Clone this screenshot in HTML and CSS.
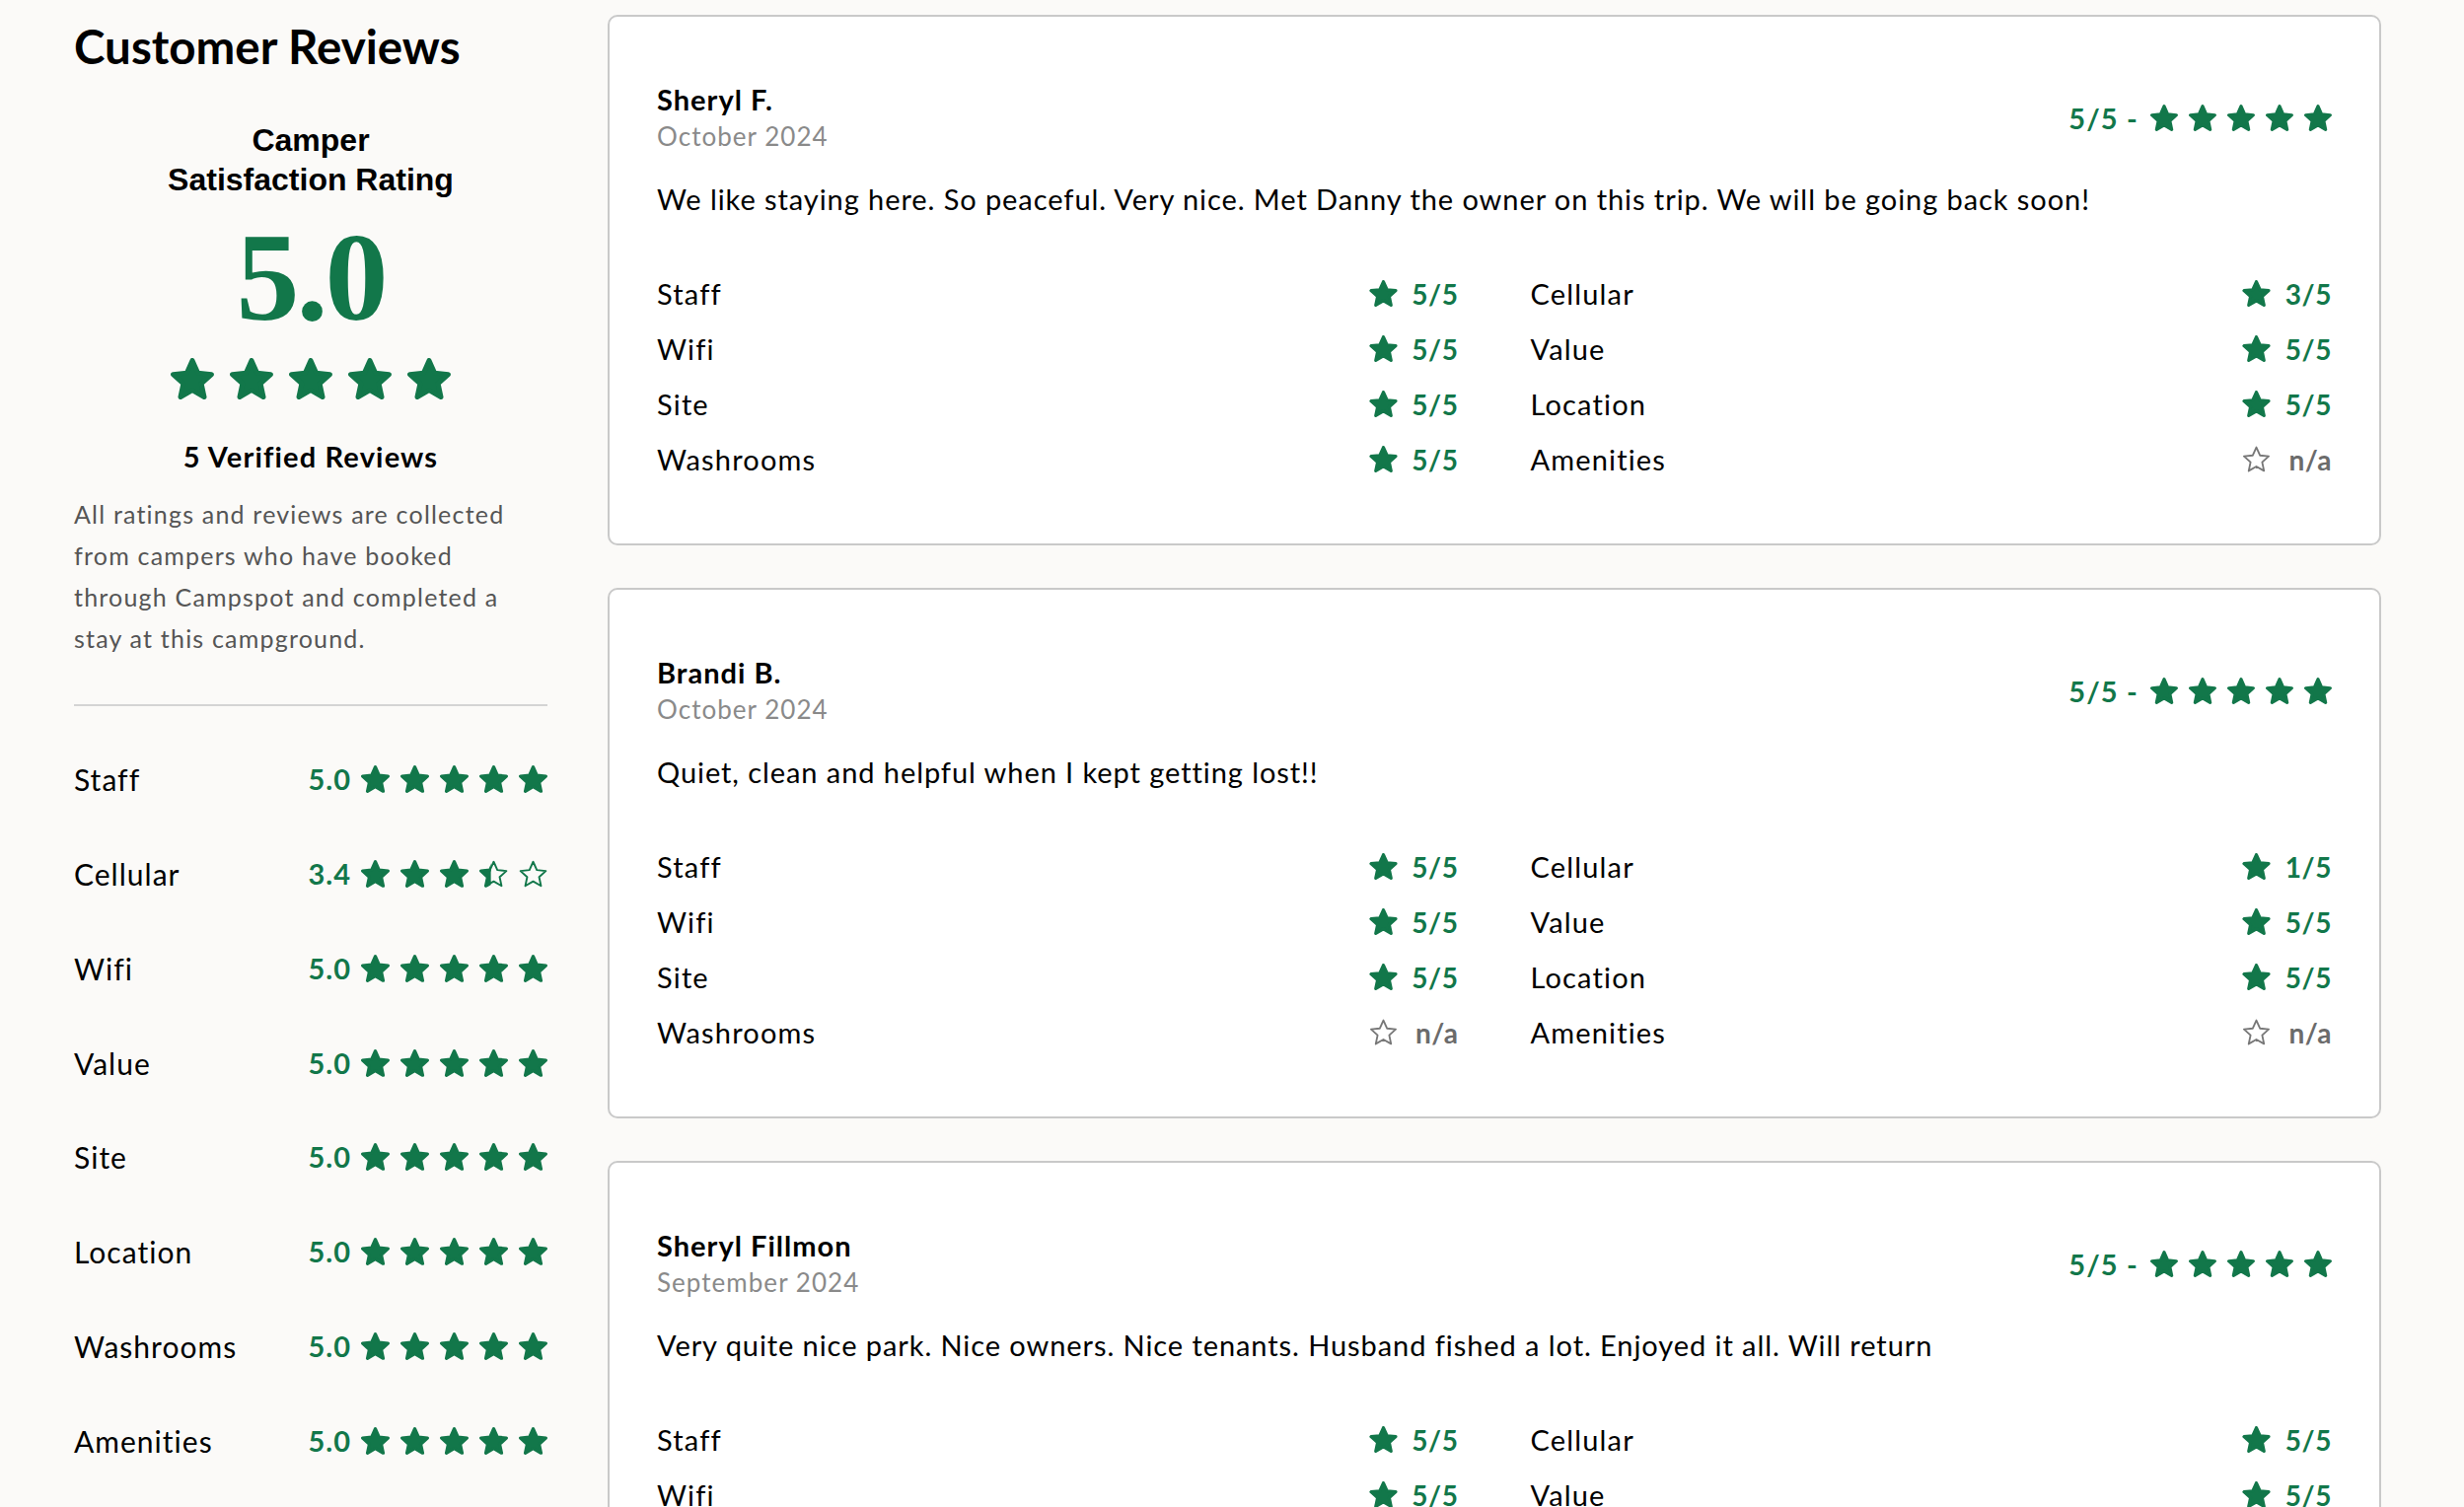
FILE: index.html
```html
<!DOCTYPE html>
<html lang="en">
<head>
<meta charset="utf-8">
<title>Customer Reviews</title>
<link rel="stylesheet" href="styles.css">
</head>
<body>
<svg class="sprite" width="0" height="0" aria-hidden="true">
  <defs>
    <symbol id="star" viewBox="0 0 21.42 20.49">
      <polygon points="10.71,1.2 13.473,7.398 20.221,8.11 15.18,12.652 16.588,19.29 10.71,15.9 4.832,19.29 6.24,12.652 1.199,8.11 7.947,7.398" fill="currentColor" stroke="currentColor" stroke-width="2.4" stroke-linejoin="round"/>
    </symbol>
    <symbol id="star-o" viewBox="0 0 21.42 20.49">
      <polygon points="10.71,1.2 13.473,7.398 20.221,8.11 15.18,12.652 16.588,19.29 10.71,15.9 4.832,19.29 6.24,12.652 1.199,8.11 7.947,7.398" fill="none" stroke="currentColor" stroke-width="1.4" stroke-linejoin="round"/>
    </symbol>
    <clipPath id="clip-40">
      <rect x="0" y="0" width="8.6" height="21"/>
    </clipPath>
  </defs>
</svg>

<div class="page">
  <aside class="summary">
    <h2 class="title">Customer Reviews</h2>
    <div class="overall">
      <div class="overall-label">Camper<br>Satisfaction Rating</div>
      <div class="overall-score">5.0</div>
      <div class="overall-stars">
        <svg><use href="#star"/></svg>
        <svg><use href="#star"/></svg>
        <svg><use href="#star"/></svg>
        <svg><use href="#star"/></svg>
        <svg><use href="#star"/></svg>
      </div>
      <div class="verified">5 Verified Reviews</div>
    </div>
    <p class="disclaimer">All ratings and reviews are collected from campers who have booked through Campspot and completed a stay at this campground.</p>
    <hr class="divider">
    <ul class="cats">
      <li class="cat"><span class="cat-name">Staff</span><span class="cat-score"><span class="cat-num">5.0</span><span class="stars-sm"><svg><use href="#star"/></svg><svg><use href="#star"/></svg><svg><use href="#star"/></svg><svg><use href="#star"/></svg><svg><use href="#star"/></svg></span></span></li>
      <li class="cat"><span class="cat-name">Cellular</span><span class="cat-score"><span class="cat-num">3.4</span><span class="stars-sm"><svg><use href="#star"/></svg><svg><use href="#star"/></svg><svg><use href="#star"/></svg><svg viewBox="0 0 21.42 20.49"><use href="#star" clip-path="url(#clip-40)"/><use href="#star-o"/></svg><svg><use href="#star-o"/></svg></span></span></li>
      <li class="cat"><span class="cat-name">Wifi</span><span class="cat-score"><span class="cat-num">5.0</span><span class="stars-sm"><svg><use href="#star"/></svg><svg><use href="#star"/></svg><svg><use href="#star"/></svg><svg><use href="#star"/></svg><svg><use href="#star"/></svg></span></span></li>
      <li class="cat"><span class="cat-name">Value</span><span class="cat-score"><span class="cat-num">5.0</span><span class="stars-sm"><svg><use href="#star"/></svg><svg><use href="#star"/></svg><svg><use href="#star"/></svg><svg><use href="#star"/></svg><svg><use href="#star"/></svg></span></span></li>
      <li class="cat"><span class="cat-name">Site</span><span class="cat-score"><span class="cat-num">5.0</span><span class="stars-sm"><svg><use href="#star"/></svg><svg><use href="#star"/></svg><svg><use href="#star"/></svg><svg><use href="#star"/></svg><svg><use href="#star"/></svg></span></span></li>
      <li class="cat"><span class="cat-name">Location</span><span class="cat-score"><span class="cat-num">5.0</span><span class="stars-sm"><svg><use href="#star"/></svg><svg><use href="#star"/></svg><svg><use href="#star"/></svg><svg><use href="#star"/></svg><svg><use href="#star"/></svg></span></span></li>
      <li class="cat"><span class="cat-name">Washrooms</span><span class="cat-score"><span class="cat-num">5.0</span><span class="stars-sm"><svg><use href="#star"/></svg><svg><use href="#star"/></svg><svg><use href="#star"/></svg><svg><use href="#star"/></svg><svg><use href="#star"/></svg></span></span></li>
      <li class="cat"><span class="cat-name">Amenities</span><span class="cat-score"><span class="cat-num">5.0</span><span class="stars-sm"><svg><use href="#star"/></svg><svg><use href="#star"/></svg><svg><use href="#star"/></svg><svg><use href="#star"/></svg><svg><use href="#star"/></svg></span></span></li>
    </ul>
  </aside>

  <main class="reviews">
    <article class="card">
      <header class="card-head">
        <div class="who">
          <div class="reviewer">Sheryl F.</div>
          <div class="date">October 2024</div>
        </div>
        <div class="mini">
          <span class="mini-num">5/5 -</span>
          <span class="mini-stars"><svg><use href="#star"/></svg><svg><use href="#star"/></svg><svg><use href="#star"/></svg><svg><use href="#star"/></svg><svg><use href="#star"/></svg></span>
        </div>
      </header>
      <p class="review-text">We like staying here. So peaceful. Very nice. Met Danny the owner on this trip. We will be going back soon!</p>
      <div class="grid">
        <div class="rrow"><span>Staff</span><span class="rval"><svg><use href="#star"/></svg><span class="num">5/5</span></span></div>
        <div class="rrow"><span>Cellular</span><span class="rval"><svg><use href="#star"/></svg><span class="num">3/5</span></span></div>
        <div class="rrow"><span>Wifi</span><span class="rval"><svg><use href="#star"/></svg><span class="num">5/5</span></span></div>
        <div class="rrow"><span>Value</span><span class="rval"><svg><use href="#star"/></svg><span class="num">5/5</span></span></div>
        <div class="rrow"><span>Site</span><span class="rval"><svg><use href="#star"/></svg><span class="num">5/5</span></span></div>
        <div class="rrow"><span>Location</span><span class="rval"><svg><use href="#star"/></svg><span class="num">5/5</span></span></div>
        <div class="rrow"><span>Washrooms</span><span class="rval"><svg><use href="#star"/></svg><span class="num">5/5</span></span></div>
        <div class="rrow"><span>Amenities</span><span class="rval na"><svg><use href="#star-o"/></svg><span class="num">n/a</span></span></div>
      </div>
    </article>

    <article class="card">
      <header class="card-head">
        <div class="who">
          <div class="reviewer">Brandi B.</div>
          <div class="date">October 2024</div>
        </div>
        <div class="mini">
          <span class="mini-num">5/5 -</span>
          <span class="mini-stars"><svg><use href="#star"/></svg><svg><use href="#star"/></svg><svg><use href="#star"/></svg><svg><use href="#star"/></svg><svg><use href="#star"/></svg></span>
        </div>
      </header>
      <p class="review-text">Quiet, clean and helpful when I kept getting lost!!</p>
      <div class="grid">
        <div class="rrow"><span>Staff</span><span class="rval"><svg><use href="#star"/></svg><span class="num">5/5</span></span></div>
        <div class="rrow"><span>Cellular</span><span class="rval"><svg><use href="#star"/></svg><span class="num">1/5</span></span></div>
        <div class="rrow"><span>Wifi</span><span class="rval"><svg><use href="#star"/></svg><span class="num">5/5</span></span></div>
        <div class="rrow"><span>Value</span><span class="rval"><svg><use href="#star"/></svg><span class="num">5/5</span></span></div>
        <div class="rrow"><span>Site</span><span class="rval"><svg><use href="#star"/></svg><span class="num">5/5</span></span></div>
        <div class="rrow"><span>Location</span><span class="rval"><svg><use href="#star"/></svg><span class="num">5/5</span></span></div>
        <div class="rrow"><span>Washrooms</span><span class="rval na"><svg><use href="#star-o"/></svg><span class="num">n/a</span></span></div>
        <div class="rrow"><span>Amenities</span><span class="rval na"><svg><use href="#star-o"/></svg><span class="num">n/a</span></span></div>
      </div>
    </article>

    <article class="card">
      <header class="card-head">
        <div class="who">
          <div class="reviewer">Sheryl Fillmon</div>
          <div class="date">September 2024</div>
        </div>
        <div class="mini">
          <span class="mini-num">5/5 -</span>
          <span class="mini-stars"><svg><use href="#star"/></svg><svg><use href="#star"/></svg><svg><use href="#star"/></svg><svg><use href="#star"/></svg><svg><use href="#star"/></svg></span>
        </div>
      </header>
      <p class="review-text">Very quite nice park. Nice owners. Nice tenants. Husband fished a lot. Enjoyed it all. Will return</p>
      <div class="grid">
        <div class="rrow"><span>Staff</span><span class="rval"><svg><use href="#star"/></svg><span class="num">5/5</span></span></div>
        <div class="rrow"><span>Cellular</span><span class="rval"><svg><use href="#star"/></svg><span class="num">5/5</span></span></div>
        <div class="rrow"><span>Wifi</span><span class="rval"><svg><use href="#star"/></svg><span class="num">5/5</span></span></div>
        <div class="rrow"><span>Value</span><span class="rval"><svg><use href="#star"/></svg><span class="num">5/5</span></span></div>
        <div class="rrow"><span>Site</span><span class="rval"><svg><use href="#star"/></svg><span class="num">5/5</span></span></div>
        <div class="rrow"><span>Location</span><span class="rval"><svg><use href="#star"/></svg><span class="num">5/5</span></span></div>
        <div class="rrow"><span>Washrooms</span><span class="rval"><svg><use href="#star"/></svg><span class="num">5/5</span></span></div>
        <div class="rrow"><span>Amenities</span><span class="rval"><svg><use href="#star"/></svg><span class="num">5/5</span></span></div>
      </div>
    </article>
  </main>
</div>
</body>
</html>
```

FILE: styles.css
```css
* {
  box-sizing: border-box;
}

body {
  margin: 0;
  background: #fbfaf8;
  font-family: "Lato", "Liberation Sans", sans-serif;
  color: #111;
}

.sprite {
  position: absolute;
  width: 0;
  height: 0;
  overflow: hidden;
}

.page {
  display: flex;
  align-items: flex-start;
  gap: 61px;
  padding: 15px 84px 40px 75px;
}

/* ---------- summary column ---------- */
.summary {
  width: 480px;
  flex: none;
}

.title {
  margin: 3px 0 0;
  font-size: 47.5px;
  line-height: 58px;
  font-weight: 700;
  color: #000;
}

.overall {
  display: flex;
  flex-direction: column;
  align-items: center;
  text-align: center;
}

.overall-label {
  margin-top: 45.6px;
  font-family: "Liberation Sans", Arial, sans-serif;
  font-weight: 700;
  font-size: 32px;
  line-height: 40px;
  color: #000;
}

.overall-score {
  margin-top: 15.5px;
  font-family: "Liberation Serif", "Times New Roman", serif;
  font-weight: 700;
  font-size: 128px;
  line-height: 128px;
  letter-spacing: -3px;
  color: #12774a;
}

.overall-stars {
  margin-top: 18px;
  display: flex;
  gap: 16px;
  color: #12774a;
}

.overall-stars svg {
  width: 44px;
  height: 42px;
  display: block;
}

.verified {
  margin-top: 40px;
  font-weight: 700;
  font-size: 29px;
  line-height: 36px;
  letter-spacing: 0.04em;
  color: #000;
}

.disclaimer {
  margin: 18.5px 0 0;
  font-size: 25px;
  line-height: 42px;
  letter-spacing: 1.2px;
  color: #555;
}

.divider {
  margin: 46.7px 0 0;
  border: 0;
  height: 2px;
  background: #d4d4d4;
}

.cats {
  list-style: none;
  margin: 26px 0 0;
  padding: 0;
}

.cat {
  height: 95.8px;
  display: flex;
  align-items: center;
  justify-content: space-between;
  font-size: 30px;
  line-height: 40px;
  letter-spacing: 0.034em;
  color: #000;
}

.cat-score {
  display: flex;
  align-items: center;
  gap: 10px;
  color: #12774a;
  font-weight: 700;
  font-size: 29px;
  letter-spacing: 1px;
}

.stars-sm {
  display: flex;
  gap: 11px;
}

.stars-sm svg {
  width: 29px;
  height: 28px;
  display: block;
}

/* ---------- review cards ---------- */
.reviews {
  flex: 1;
  min-width: 0;
  display: flex;
  flex-direction: column;
  gap: 43.5px;
}

.card {
  background: #fff;
  border: 2px solid #c9c9c9;
  border-radius: 10px;
  padding: 66px 48px 57.2px;
}

.card-head {
  display: flex;
  justify-content: space-between;
  align-items: center;
}

.reviewer {
  font-weight: 700;
  font-size: 29px;
  line-height: 36px;
  letter-spacing: 0.035em;
  color: #000;
}

.date {
  margin-top: 2px;
  font-size: 26px;
  line-height: 34px;
  letter-spacing: 0.04em;
  color: #8a8a8a;
}

.mini {
  display: flex;
  align-items: center;
  gap: 12px;
  color: #12774a;
  font-weight: 700;
  font-size: 29px;
  letter-spacing: 0.04em;
}

.mini-stars {
  display: flex;
  gap: 11px;
}

.mini-stars svg {
  width: 28px;
  height: 27px;
  display: block;
}

.review-text {
  margin: 26.5px 0 0;
  font-size: 29px;
  line-height: 40px;
  letter-spacing: 0.032em;
  color: #000;
}

.grid {
  margin-top: 48px;
  display: grid;
  grid-template-columns: 1fr 1fr;
  column-gap: 73px;
}

.rrow {
  height: 56px;
  display: flex;
  align-items: center;
  justify-content: space-between;
  font-size: 29px;
  letter-spacing: 0.04em;
  color: #000;
}

.rval {
  display: flex;
  align-items: center;
  gap: 9px;
  color: #12774a;
  font-weight: 700;
  font-size: 28px;
  letter-spacing: 0.02em;
}

.rval svg {
  width: 29px;
  height: 27px;
  display: block;
}

.rval .num {
  min-width: 53px;
  text-align: right;
}

.rval.na {
  color: #6b6b6b;
}

.rval.na svg {
  color: #777;
}
```
